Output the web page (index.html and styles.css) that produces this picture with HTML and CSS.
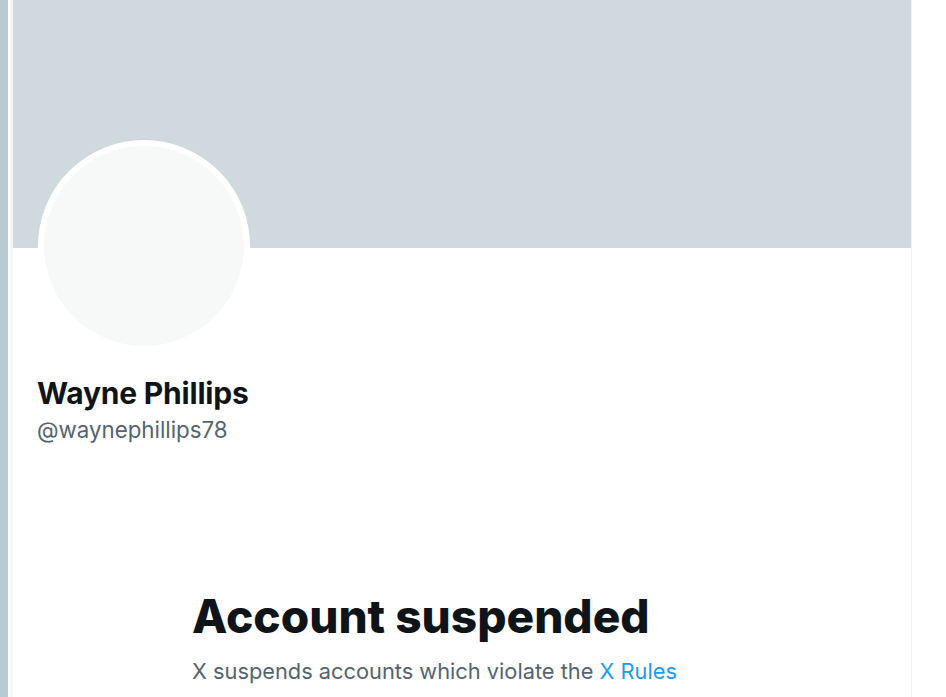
FILE: index.html
```html
<!DOCTYPE html>
<html>
<head>
<meta charset="utf-8">
<link rel="stylesheet" href="styles.css">
</head>
<body>
<div class="page">
  <div class="side"></div>
  <div class="gutter"></div>
  <main class="column">
    <div class="banner"></div>
    <div class="profile">
      <div class="avatar-row">
        <div class="avatar"></div>
      </div>
      <div class="names">
        <div class="name">Wayne Phillips</div>
        <div class="handle">@waynephillips78</div>
      </div>
    </div>
    <section class="notice">
      <h1 class="title">Account suspended</h1>
      <p class="desc">X suspends accounts which violate the <a class="link" href="#">X Rules</a></p>
    </section>
  </main>
</div>
</body>
</html>
```
FILE: styles.css
```css
html, body {
  margin: 0;
  padding: 0;
  background: #ffffff;
  height: 100%;
  overflow: hidden;
}
body {
  font-family: Inter, "Noto Sans", "Liberation Sans", sans-serif;
}
.page {
  display: flex;
  height: 697px;
}
.side {
  width: 8px;
  background: #b9cad3;
  flex: none;
}
.gutter {
  width: 2px;
  flex: none;
  background: #ffffff;
}
.column {
  width: 898px;
  flex: none;
  border-left: 3px solid #f3f6f7;
  border-right: 1px solid #eff3f4;
  display: flex;
  flex-direction: column;
}
.banner {
  height: 248px;
  background: #cfd9de;
  flex: none;
}
.profile {
  padding: 0 24px 0 24px;
}
.avatar-row {
  height: 126px;
  position: relative;
}
.avatar {
  position: absolute;
  left: 1px;
  top: -108px;
  width: 200px;
  height: 200px;
  border-radius: 50%;
  background: #f7f9f9;
  border: 6px solid #ffffff;
}
.names {
  display: flex;
  flex-direction: column;
}
.name {
  font-size: 30px;
  font-weight: 700;
  color: #0f1419;
  line-height: 38px;
  letter-spacing: -0.2px;
}
.handle {
  margin-top: 3px;
  font-size: 22.3px;
  color: #536471;
  line-height: 30px;
}
.notice {
  padding: 143px 0 0 179px;
}
.title {
  margin: 0;
  font-size: 46px;
  font-weight: 800;
  color: #0f1419;
  line-height: 56px;
  letter-spacing: 0;
}
.desc {
  margin: 13px 0 0 0;
  font-size: 21.8px;
  color: #536471;
  line-height: 28px;
}
.link {
  color: #1d9bf0;
  text-decoration: none;
}
```
